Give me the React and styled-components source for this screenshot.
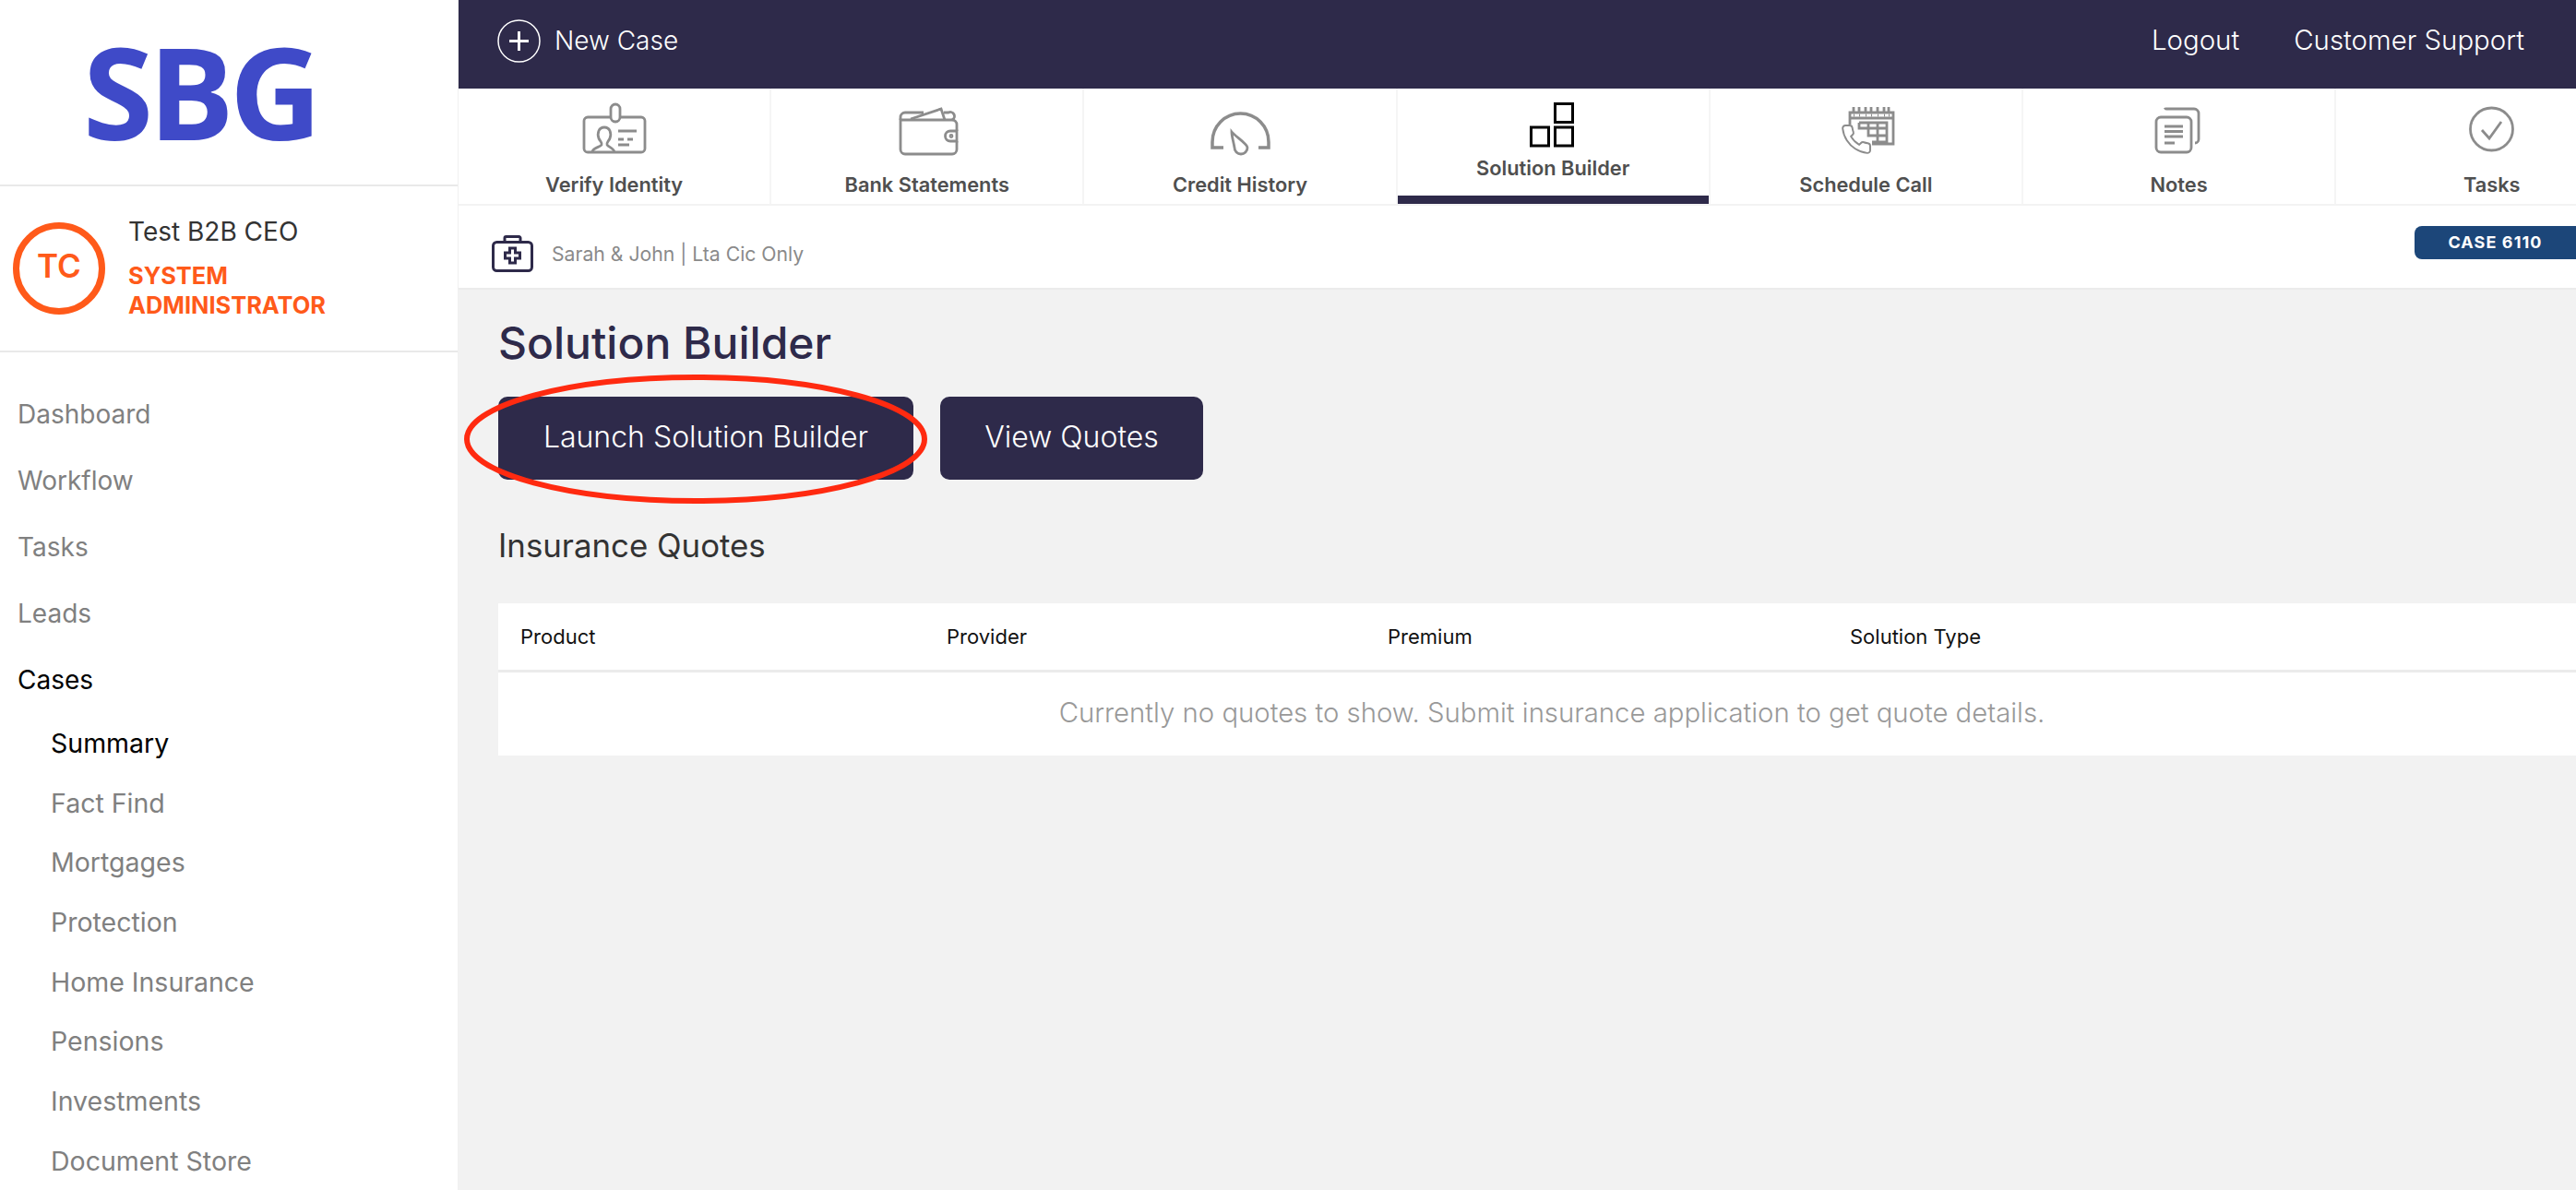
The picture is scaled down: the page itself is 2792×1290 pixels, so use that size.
import React from 'react';
import styled, { createGlobalStyle } from 'styled-components';

const GlobalStyle = createGlobalStyle`
  html, body {
    margin: 0;
    padding: 0;
    background: #fff;
  }
  * {
    box-sizing: border-box;
  }
`;

const Page = styled.div`
  display: flex;
  width: 2792px;
  height: 1290px;
  overflow: hidden;
  font-family: Inter, "Liberation Sans", sans-serif;
`;

const Sidebar = styled.aside`
  flex: 0 0 497px;
  background: #fff;
  border-right: 1px solid #f0f0f0;
`;

const LogoBox = styled.div`
  height: 202px;
  padding: 8px 0 0 90px;
  border-bottom: 2px solid #e9e9e9;
`;

const Logo = styled.div`
  font-family: "Open Sans", sans-serif;
  font-size: 138px;
  line-height: 180px;
  font-weight: 700;
  letter-spacing: -5px;
  color: #3f4ac8;
`;

const Profile = styled.div`
  display: flex;
  height: 180px;
  padding: 30px 0 0 14px;
  gap: 25px;
  border-bottom: 2px solid #e9e9e9;
`;

const Avatar = styled.div`
  flex: 0 0 100px;
  height: 100px;
  margin-top: 9px;
  display: flex;
  align-items: center;
  justify-content: center;
  padding-bottom: 6px;
  border: 7px solid #ff5a1a;
  border-radius: 50%;
  color: #ff5a1a;
  font-size: 35px;
  font-weight: 600;
`;

const ProfileName = styled.div`
  font-size: 28px;
  line-height: 38px;
  color: #333;
  margin-bottom: 13px;
`;

const ProfileRole = styled.div`
  font-size: 25.4px;
  line-height: 32px;
  font-weight: 700;
  color: #ff5a1a;
`;

const Nav = styled.nav`
  padding: 31px 0 0 19px;
`;

const NavItem = styled.div`
  height: 72px;
  line-height: 72px;
  font-size: 28px;
  color: ${(p) => (p.$active ? '#000' : '#808080')};
`;

const SubNav = styled.div`
  padding: 1px 0 0 36px;
`;

const SubItem = styled.div`
  height: 64.7px;
  line-height: 64px;
  font-size: 28.5px;
  color: ${(p) => (p.$active ? '#000' : '#808080')};
`;

const Main = styled.main`
  flex: 1;
  min-width: 0;
  background: #f2f2f2;
`;

const TopBar = styled.header`
  display: flex;
  align-items: center;
  justify-content: space-between;
  height: 96px;
  padding: 0 56px 7px 42px;
  background: #2e2a4a;
  color: #fff;
  font-weight: 300;
`;

const NewCase = styled.div`
  display: flex;
  align-items: center;
  gap: 15px;
  font-size: 28px;
`;

const NewCaseText = styled.span`
  margin-top: -2px;
`;

const TopLinks = styled.div`
  display: flex;
  gap: 59px;
  margin-top: -2px;
  font-size: 29.4px;
`;

const Tabs = styled.div`
  display: flex;
  height: 127px;
  background: #fff;
  border-bottom: 2px solid #f3f3f3;
`;

const Tab = styled.div`
  position: relative;
  flex: 0 0 339.2px;
  display: flex;
  flex-direction: column;
  align-items: center;
  padding-top: 12px;
  border-right: 2px solid #f5f5f5;
`;

const TabIcon = styled.svg`
  display: block;
  width: 80px;
  height: 64px;
  fill: none;
  stroke: ${(p) => (p.$active ? '#000' : '#8c8c8c')};
  stroke-width: ${(p) => (p.$active ? 3 : 2.8)};
`;

const TabLabel = styled.div`
  margin-top: ${(p) => (p.$active ? '-4px' : '14px')};
  font-size: 21.8px;
  line-height: 28px;
  font-weight: 600;
  color: #4f4f4f;
`;

const ActiveBar = styled.div`
  position: absolute;
  left: 0;
  right: 0;
  bottom: 0;
  height: 9px;
  background: #2e2a4a;
`;

const CaseHeader = styled.div`
  display: flex;
  align-items: flex-start;
  justify-content: space-between;
  height: 91px;
  background: #fff;
  border-bottom: 2px solid #ebebeb;
`;

const CaseTitle = styled.div`
  display: flex;
  align-items: center;
  gap: 20px;
  padding: 32px 0 0 36px;
  font-size: 21.2px;
  line-height: 34px;
  color: #8a8a8a;
`;

const CaseBadge = styled.div`
  width: 175px;
  height: 36px;
  margin-top: 22px;
  border-radius: 8px 0 0 8px;
  background: #1c4679;
  color: #fff;
  font-size: 18px;
  line-height: 36px;
  font-weight: 700;
  letter-spacing: 1.1px;
  text-align: center;
`;

const Content = styled.section`
  padding: 32px 0 0 43px;
`;

const Title = styled.h1`
  margin: 0 0 32px;
  font-size: 48px;
  line-height: 52px;
  font-weight: 450;
  color: #2e2a4a;
`;

const Actions = styled.div`
  position: relative;
  display: flex;
  gap: 29px;
`;

const ActionButton = styled.button`
  width: ${(p) => p.$width}px;
  height: 90px;
  padding: 0 0 3px;
  border: 0;
  border-radius: 10px;
  background: #2e2a4a;
  color: #fff;
  font-family: inherit;
  font-size: 32px;
  font-weight: 300;
`;

const Annotation = styled.svg`
  position: absolute;
  left: -37px;
  top: -24px;
  width: 502px;
  height: 140px;
  fill: none;
  stroke: #ff2a10;
  stroke-width: 6;
`;

const SectionTitle = styled.h2`
  margin: 51px 0 43px;
  font-size: 34.8px;
  line-height: 40px;
  font-weight: 400;
  color: #333;
`;

const QuotesTable = styled.div`
  width: 2284px;
  background: #fff;
`;

const QuotesHead = styled.div`
  display: grid;
  grid-template-columns: 462px 478px 501px 1fr;
  height: 75px;
  padding: 0 0 0 24px;
  align-items: center;
  border-bottom: 3px solid #ebebeb;
  font-size: 22px;
  color: #111;
`;

const EmptyRow = styled.div`
  height: 90px;
  line-height: 88px;
  text-align: center;
  font-size: 29.3px;
  font-weight: 300;
  color: #999;
`;

const IdIcon = () => (
  <TabIcon viewBox="0 0 80 64">
    <path d="M36 19H11a4 4 0 0 0-4 4v30a4 4 0 0 0 4 4h58a4 4 0 0 0 4-4V23a4 4 0 0 0-4-4H46" />
    <rect x="36" y="5" width="10" height="19" rx="5" />
    <path d="M16 57c0-5 8-5 10-8 1-2-1-3-3-7-2-6 0-12 6-12s8 6 6 12c-2 4-4 5-3 7 2 3 7 3 8 8" />
    <path d="M44 34h20M44 43h6M54 43h6M44 49h12" />
  </TabIcon>
);

const WalletIcon = () => (
  <TabIcon viewBox="0 0 80 64">
    <path d="M72 34V27a5 5 0 0 0-5-5H11v32a5 5 0 0 0 5 5h51a5 5 0 0 0 5-5v-9" />
    <path d="M11 22v-3a5 5 0 0 1 5-5h20M22 21l33-11 4 12M58 14h5a4 4 0 0 1 4 8" />
    <path d="M72 34h-7a5.5 5.5 0 0 0 0 11h7z" />
    <circle cx="66" cy="39.5" r="1" />
  </TabIcon>
);

const GaugeIcon = () => (
  <TabIcon viewBox="0 0 80 64">
    <path d="M22 52H10V46A30.5 31 0 0 1 71 46V52H60" strokeWidth="3.5" />
    <path d="M31 35C35 40 48 48 48 52A7 7 0 0 1 34 52C33 46 31 40 31 35Z" />
  </TabIcon>
);

const BlocksIcon = () => (
  <TabIcon viewBox="0 0 80 64" $active>
    <rect x="42.5" y="4.5" width="19" height="20" />
    <rect x="16.5" y="30" width="19" height="20" />
    <rect x="42.5" y="30" width="19" height="20" />
  </TabIcon>
);

const CallIcon = () => (
  <TabIcon viewBox="0 0 80 64" strokeWidth="1.8">
    <path d="M23 27V14h47v34H47" />
    <path d="M23 20h47" />
    <path d="M27 8v5M33 8v5M40 8v5M46 8v5M53 8v5M60 8v5M65 8v5" />
    <path d="M27 17h1M33 17h1M40 17h1M46 17h1M53 17h1M60 17h1M65 17h1" />
    <path d="M33 25h30v21H47M33 25v6h30M38 31h25M43 25v14h20M53 25v21" />
    <g transform="translate(12 25) scale(1.5)">
      <path
        strokeWidth="1.3"
        d="M22 16.92v3a2 2 0 0 1-2.18 2 19.79 19.79 0 0 1-8.63-3.07 19.5 19.5 0 0 1-6-6 19.79 19.79 0 0 1-3.07-8.67A2 2 0 0 1 4.11 2h3a2 2 0 0 1 2 1.72 12.84 12.84 0 0 0 .7 2.81 2 2 0 0 1-.45 2.11L8.09 9.91a16 16 0 0 0 6 6l1.27-1.27a2 2 0 0 1 2.11-.45 12.84 12.84 0 0 0 2.81.7A2 2 0 0 1 22 16.92z"
      />
    </g>
  </TabIcon>
);

const NotesIcon = () => (
  <TabIcon viewBox="0 0 80 64">
    <rect x="15" y="19" width="38" height="38" rx="5" />
    <path d="M24 10.5a2 2 0 0 1 2-0.5h30a5 5 0 0 1 5 5v28a4 4 0 0 1-4 4" />
    <path d="M24 29h20M24 34.5h20M24 40h20M24 47h11" />
  </TabIcon>
);

const CheckIcon = () => (
  <TabIcon viewBox="0 0 80 64">
    <circle cx="39.5" cy="32" r="23" />
    <path d="M29 33l8 9 13-18" />
  </TabIcon>
);

const tabs = [
  { label: 'Verify Identity', Icon: IdIcon },
  { label: 'Bank Statements', Icon: WalletIcon },
  { label: 'Credit History', Icon: GaugeIcon },
  { label: 'Solution Builder', Icon: BlocksIcon, active: true },
  { label: 'Schedule Call', Icon: CallIcon },
  { label: 'Notes', Icon: NotesIcon },
  { label: 'Tasks', Icon: CheckIcon },
];

const mainNav = ['Dashboard', 'Workflow', 'Tasks', 'Leads'];
const subNav = ['Fact Find', 'Mortgages', 'Protection', 'Home Insurance', 'Pensions', 'Investments', 'Document Store'];

const App = () => (
  <Page>
    <GlobalStyle />
    <Sidebar>
      <LogoBox>
        <Logo>SBG</Logo>
      </LogoBox>
      <Profile>
        <Avatar>TC</Avatar>
        <div>
          <ProfileName>Test B2B CEO</ProfileName>
          <ProfileRole>
            SYSTEM
            <br />
            ADMINISTRATOR
          </ProfileRole>
        </div>
      </Profile>
      <Nav>
        {mainNav.map((item) => (
          <NavItem key={item}>{item}</NavItem>
        ))}
        <NavItem $active>Cases</NavItem>
        <SubNav>
          <SubItem $active>Summary</SubItem>
          {subNav.map((item) => (
            <SubItem key={item}>{item}</SubItem>
          ))}
        </SubNav>
      </Nav>
    </Sidebar>
    <Main>
      <TopBar>
        <NewCase>
          <svg width="47" height="47" viewBox="0 0 47 47" fill="none" stroke="#fff">
            <circle cx="23.5" cy="23.5" r="22.5" strokeWidth="1.5" />
            <path d="M23.5 13v21M13 23.5h21" strokeWidth="3" />
          </svg>
          <NewCaseText>New Case</NewCaseText>
        </NewCase>
        <TopLinks>
          <span>Logout</span>
          <span>Customer Support</span>
        </TopLinks>
      </TopBar>
      <Tabs>
        {tabs.map(({ label, Icon, active }) => (
          <Tab key={label}>
            <Icon />
            <TabLabel $active={active}>{label}</TabLabel>
            {active && <ActiveBar />}
          </Tab>
        ))}
      </Tabs>
      <CaseHeader>
        <CaseTitle>
          <svg width="45" height="40" viewBox="0 0 45 40" fill="none" stroke="#2e2a4a" strokeWidth="3">
            <rect x="1.5" y="7.5" width="42" height="31" rx="4" />
            <path d="M14 7V3a1.5 1.5 0 0 1 1.5-1.5h14A1.5 1.5 0 0 1 31 3v4" />
            <path d="M19.5 14h6v5h5v6h-5v5h-6v-5h-5v-6h5z" />
          </svg>
          Sarah &amp; John | Lta Cic Only
        </CaseTitle>
        <CaseBadge>CASE 6110</CaseBadge>
      </CaseHeader>
      <Content>
        <Title>Solution Builder</Title>
        <Actions>
          <ActionButton $width={450}>Launch Solution Builder</ActionButton>
          <ActionButton $width={285}>View Quotes</ActionButton>
          <Annotation viewBox="0 0 502 140">
            <ellipse cx="251" cy="70" rx="248" ry="67" />
          </Annotation>
        </Actions>
        <SectionTitle>Insurance Quotes</SectionTitle>
        <QuotesTable>
          <QuotesHead>
            <span>Product</span>
            <span>Provider</span>
            <span>Premium</span>
            <span>Solution Type</span>
          </QuotesHead>
          <EmptyRow>Currently no quotes to show. Submit insurance application to get quote details.</EmptyRow>
        </QuotesTable>
      </Content>
    </Main>
  </Page>
);

export default App;
